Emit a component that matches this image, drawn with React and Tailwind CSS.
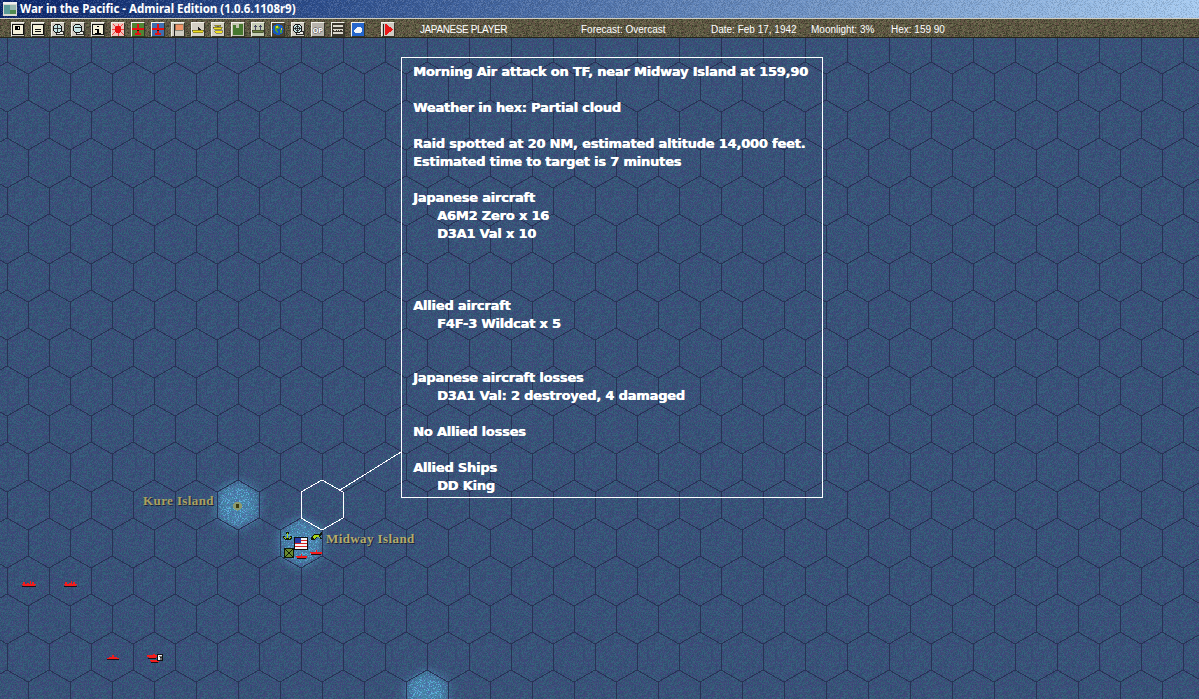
import React, { useMemo } from 'react';

// small seeded generator so the dither is the same on every load
const makeNoisePaths = (size, colors, seed) => {
  let s = seed;
  const next = () => {
    s = (s * 1664525 + 1013904223) % 4294967296;
    return s / 4294967296;
  };
  const paths = colors.map(() => '');
  for (let y = 0; y < size; y++) {
    for (let x = 0; x < size; x++) {
      const i = Math.floor(next() * colors.length);
      paths[i] += `M${x} ${y}h1v1h-1z`;
    }
  }
  return paths;
};

const NoiseTile = ({ id, size, colors, seed }) => {
  const paths = useMemo(() => makeNoisePaths(size, colors, seed), [size, colors, seed]);
  return (
    <pattern id={id} width={size} height={size} patternUnits="userSpaceOnUse">
      {paths.map((d, i) => (
        <path key={i} d={d} fill={colors[i]} />
      ))}
    </pattern>
  );
};

const DitherOverlay = ({ id, colors, seed }) => (
  <svg className="absolute inset-0 w-full h-full pointer-events-none" shapeRendering="crispEdges">
    <defs>
      <NoiseTile id={id} size={48} colors={colors} seed={seed} />
    </defs>
    <rect width="100%" height="100%" fill={`url(#${id})`} />
  </svg>
);

const MAP_NOISE = ['#2f6a7a99', '#46408699', '#00000000', '#2a4a6e88', '#4f4a7a66', '#3c6c8a88'];
const BAR_NOISE = ['#00000000', '#2a2a1a88', '#85856077', '#704c4c77', '#4a5a3a77'];
const TITLE_NOISE = ['#00000000', '#ffffff1c', '#0000001c', '#00000000'];

const hexPath = (cx, cy) =>
  `M${cx - 21} ${cy - 13}L${cx} ${cy - 25}L${cx + 21} ${cy - 13}V${cy + 13}L${cx} ${cy + 25}L${cx - 21} ${cy + 13}Z`;

const buildGrid = () => {
  let d = '';
  for (let k = -2; k < 10; k++) {
    for (let i = -1; i < 30; i++) {
      d += hexPath(28 + 42 * i, 125 + 76 * k);
      d += hexPath(49 + 42 * i, 87 + 76 * k);
    }
  }
  return d;
};

const Plane = () => (
  <>
    <path d="M6 1h2v12H6z" fill="#e81010" />
    <path d="M0 5h14v2.500H0zM4 11h6v2H4z" fill="#e81010" />
    <path d="M6 8h2v1H6z" fill="#300" />
  </>
);

const Frame = ({ fill = '#f4f0d8' }) => <rect x="1" y="1" width="12" height="12" fill={fill} stroke="#111" strokeWidth="1.400" />;

const Monitor = ({ children }) => (
  <>
    <path d="M5 9h8v4H5z" fill="#f0f0e8" stroke="#111" />
    <circle cx="6.500" cy="6" r="5" fill="#c4e4e4" stroke="#111" strokeWidth="1.300" />
    {children}
  </>
);

const toolIcons = [
  { art: <><Frame /><path d="M3 3h6v5H3z" fill="#000" /><path d="M7 4h1v2H7z" fill="#f4f0d8" /></> },
  { art: <><Frame /><path d="M3.500 3.500h7v1h-7zM3.500 6h7v1h-7zM3.500 8.500h7v1h-7zM3.500 10.500h5v1h-5z" fill="#111" /></> },
  { art: <Monitor><path d="M2 6h9M6.500 2v8" stroke="#222" /></Monitor> },
  { art: <Monitor><path d="M3 4.500h7v1H3zM3 7h7v1H3z" fill="#222" /></Monitor> },
  { art: <><Frame /><path d="M5.500 2.500h3v2h-3zM4 6h4.500v4.500H10v1.500H4v-1.500h1.500V7.500H4z" fill="#000" /></> },
  { bg: '#f0c4bc', art: <><path d="M7 0v14M0 7h14M1 1l12 12M13 1L1 13" stroke="#f03030" /><circle cx="7" cy="7" r="4" fill="#e81010" /></> },
  { bg: '#4f8434', art: <Plane /> },
  { bg: '#3f6eae', art: <Plane /> },
  { bg: '#cfcbc0', art: <><path d="M2.500 0v14" stroke="#222" strokeWidth="1.200" /><path d="M3.500 1h9.500v7H3.500z" fill="#f09468" stroke="#443" strokeWidth="0.600" /></> },
  { bg: '#d4d0c4', art: <><path d="M6.500 2h1v5h-1zM7.500 4l3 3h-3z" fill="#222" /><path d="M0 8h14l-2 3H2z" fill="#f0e020" stroke="#222" strokeWidth="0.500" /></> },
  { bg: '#d4d0c4', art: <path d="M3 2h7v1H7.500v1.500H12l-1.500 2.500H3L1.500 4.500h5V3H3zM3 8.500h10l-1.500 3H4.500z" fill="#f0e020" stroke="#222" strokeWidth="0.500" /> },
  { bg: '#c4c4b0', art: <path d="M1 2h4v3h3V1h5v12H1z" fill="#47782f" /> },
  { bg: '#c4ccb4', art: <><path d="M4 2v5M10 2v5M3 4l1-2 1 2M9 4l1-2 1 2" stroke="#335" fill="none" /><path d="M0 8h14l-1 3H1z" fill="#6a8040" stroke="#222" strokeWidth="0.500" /></> },
  { bg: '#4a4232', art: <><circle cx="7" cy="7" r="6.500" fill="#1858c0" /><path d="M3 4l4-2 2 3-3 2 1 4-3-2zM9 8l3-1-1 4-2 1z" fill="#50a030" /><path d="M5 3h2v2H5zM10 5h2v2h-2z" fill="#e8d020" /></> },
  { art: <Monitor><circle cx="6.500" cy="6" r="2.500" fill="none" stroke="#222" /><path d="M6.500 1v10M1.500 6h10" stroke="#222" /></Monitor> },
  { bg: '#b8b4ac', art: <text x="7" y="10.500" textAnchor="middle" fontFamily="'DejaVu Sans', sans-serif" fontWeight="700" fontSize="8" fill="#fff" stroke="#222" strokeWidth="0.800" paintOrder="stroke" textLength="12" lengthAdjust="spacingAndGlyphs">OP</text> },
  { bg: '#3c382e', art: <path d="M1 2h12v2H1zM1 6h12v1H1zM2 8h1v1H2zM4 8h1v1H4zM6 8h1v1H6zM8 8h1v1H8zM10 8h1v1h-1zM12 8h1v1h-1zM1 10h12v2H1z" fill="#dcd8cc" /> },
  { bg: '#2466cc', art: <path d="M3 10q-1-3 2-4 1-3 4-2 3 1 3 4 0 3-2 3H5q-2 0-2-1z" fill="#eef4fa" /> },
];

const ToolButton = ({ bg, art, className = 'mr-[6px]' }) => (
  <div className={`relative w-[14px] h-[15px] shrink-0 border border-t-[#f0f0e8] border-l-[#f0f0e8] border-r-[#35352a] border-b-[#35352a] bg-[#cfcbc2] ${className}`}>
    <svg width="12" height="13" viewBox="0 0 14 14" shapeRendering="crispEdges" style={bg ? { background: bg } : undefined}>
      {art}
    </svg>
  </div>
);

const Ship = ({ x, y, w }) => (
  <>
    <path d={`M${x} ${y + 3}h${w}v1h-1v1h-${w - 2}v-1h-1z`} fill="#f41c1c" />
    <path d={`M${x + 1} ${y + 1}h2v2h-2zM${x + w - 6} ${y}h1v3h-1zM${x + w - 4} ${y + 1}h2v2h-2zM${x + 5} ${y + 2}h2v1h-2z`} fill="#f41c1c" />
    <path d={`M${x} ${y + 5}h${w}v1h-${w}z`} fill="#1a1018" />
  </>
);

const reportLines = [
  { text: 'Morning Air attack on TF, near Midway Island at 159,90' },
  { text: '' },
  { text: 'Weather in hex: Partial cloud' },
  { text: '' },
  { text: 'Raid spotted at 20 NM, estimated altitude 14,000 feet.' },
  { text: 'Estimated time to target is 7 minutes' },
  { text: '' },
  { text: 'Japanese aircraft' },
  { text: 'A6M2 Zero x 16', indent: true },
  { text: 'D3A1 Val x 10', indent: true },
  { text: '' },
  { text: '' },
  { text: '' },
  { text: 'Allied aircraft' },
  { text: 'F4F-3 Wildcat x 5', indent: true },
  { text: '' },
  { text: '' },
  { text: 'Japanese aircraft losses' },
  { text: 'D3A1 Val: 2 destroyed, 4 damaged', indent: true },
  { text: '' },
  { text: 'No Allied losses' },
  { text: '' },
  { text: 'Allied Ships' },
  { text: 'DD King', indent: true },
];

const MapLayer = () => {
  const grid = useMemo(buildGrid, []);
  return (
    <svg className="absolute inset-0" width="1199" height="661" viewBox="0 38 1199 661">
      <defs>
        <NoiseTile id="mapNoise" size={64} colors={MAP_NOISE} seed={77} />
        <filter id="glow" x="-40%" y="-40%" width="180%" height="180%">
          <feGaussianBlur stdDeviation="5" />
        </filter>
      </defs>
      <rect x="0" y="38" width="1199" height="661" fill="#384f74" />
      <g filter="url(#glow)" fill="#5cb0dc">
        <path d={hexPath(238, 505)} />
        <path d={hexPath(301, 543)} />
        <path d={hexPath(427, 695)} />
      </g>
      <rect x="0" y="38" width="1199" height="661" fill="url(#mapNoise)" />
      <path d={grid} fill="none" stroke="#283254" strokeWidth="1" shapeRendering="crispEdges" />

      <g shapeRendering="crispEdges">
        <path d={hexPath(322, 505)} fill="none" stroke="#fff" />
        <path d="M340 490L401 452" stroke="#fff" fill="none" />

        {/* Kure atoll */}
        <circle cx="237.500" cy="506" r="4.500" fill="#8a9a70" />
        <circle cx="237.500" cy="506" r="2" fill="#3a3a10" />

        {/* Midway base icons */}
        <path d="M286 532h3v2h-1v4h2v-2h2v2l-2 2h-5l-2-2v-2h2v2h2v-4h-1z" fill="#101808" />
        <path d="M287 533h1v5h-1zM284 537h1l1 1.500h3l1-1.500h1l-1 2h-5z" fill="#a8d818" />
        <path d="M311 537l4-3h4l3-2v2l-2 2 2 3h-2l-2-2-4 3h-3z" fill="#101808" />
        <path d="M312 537l3-2h4l2-2-3 3 2 2-3-1-3 2z" fill="#a8d818" />
        <rect x="294.500" y="537.500" width="13" height="12" fill="#f4f4f4" stroke="#101010" />
        <path d="M295 540h12v1h-12zM295 543h12v1h-12zM295 546h12v1h-12z" fill="#d82020" />
        <rect x="295" y="538" width="6" height="5" fill="#2838a0" />
        <rect x="284.500" y="548.500" width="9" height="9" fill="#6a8a30" stroke="#101808" />
        <path d="M285 549l8 8M293 549l-8 8" stroke="#101808" />
        <path d="M296 556h11v1l-1 1h-9l-1-1zM301 554h1v2h-1z" fill="#f41c1c" />
        <path d="M297 558h9v1h-9z" fill="#1a1018" />
        <path d="M310 552h12v1l-1 1h-10l-1-1zM316 550h1v2h-1z" fill="#f41c1c" />
        <path d="M311 554h10v1h-10z" fill="#1a1018" />

        {/* task forces at sea */}
        <Ship x={22} y={581} w={14} />
        <Ship x={64} y={581} w={13} />
        <path d="M107 658h12v1h-12zM109 657h8v1h-8zM112 655h2v2h-2z" fill="#f41c1c" />
        <path d="M107 659h12v1h-12z" fill="#1a1018" />
        <path d="M147 655h6v-1h2v1h2v2h-1l-1 1h-6l-1-1h-1z" fill="#f41c1c" />
        <path d="M148 658h8v1h-8z" fill="#1a1018" />
        <path d="M150 660h9v1l-1 1h-7l-1-1z" fill="#f41c1c" />
        <path d="M151 662h7v1h-7z" fill="#1a1018" />
        <rect x="157.500" y="654.500" width="5" height="6" fill="#f4f4f4" stroke="#111" />
        <path d="M159 656h3v1h-2v.500h2v1h-2v.500h3" fill="none" stroke="#111" strokeWidth="0.600" />
      </g>
    </svg>
  );
};

export default function App() {
  return (
    <div className="w-[1199px] h-[699px] flex flex-col overflow-hidden bg-[#384f74]">
      {/* Title bar */}
      <div className="relative h-[18px] shrink-0 flex items-center pl-[3px] bg-gradient-to-r from-[#0a246a] to-[#a6caf0]">
        <DitherOverlay id="titleNoise" colors={TITLE_NOISE} seed={11} />
        <svg className="relative shrink-0" width="14" height="14" viewBox="0 0 14 14" shapeRendering="crispEdges">
          <rect width="14" height="14" fill="#d8d8d0" />
          <rect x="1" y="3" width="6" height="9" fill="#5a9a98" />
          <rect x="7" y="3" width="6" height="5" fill="#98b8b0" />
          <rect x="7" y="8" width="6" height="4" fill="#508a50" />
          <rect width="14" height="2" fill="#f0f0f0" />
        </svg>
        <span className="relative ml-[3px] font-['Noto_Sans',sans-serif] font-bold text-[11.500px] leading-none text-white whitespace-pre">
          War in the Pacific - Admiral Edition (1.0.6.1108r9)
        </span>
      </div>

      {/* Toolbar */}
      <div className="relative h-[20px] shrink-0 flex items-center pl-[11px] pt-[2px] bg-[#5c5742] border-t border-t-[#cfcbc0] border-b border-b-[#27261c] font-['Liberation_Sans',sans-serif] text-[10px] text-white whitespace-pre">
        <DitherOverlay id="barNoise" colors={BAR_NOISE} seed={29} />
        {toolIcons.map((icon, i) => (
          <ToolButton key={i} bg={icon.bg} art={icon.art} />
        ))}
        <ToolButton
          className="ml-[10px]"
          art={
            <>
              <path d="M2 0v14" stroke="#222" strokeWidth="1.500" />
              <path d="M4 0l9 7-9 7z" fill="#e81818" />
            </>
          }
        />
        <span className="relative ml-[25px] w-[161px] pt-[1px] tracking-[-0.4px]">JAPANESE PLAYER</span>
        <span className="relative w-[130px] pt-[1px]">Forecast: Overcast</span>
        <span className="relative w-[100px] pt-[1px]">Date: Feb 17, 1942</span>
        <span className="relative w-[80px] pt-[1px]">Moonlight: 3%</span>
        <span className="relative pt-[1px]">Hex: 159 90</span>
      </div>

      {/* Map */}
      <div className="relative flex-1">
        <MapLayer />

        <span className="absolute left-[143px] top-[455px] font-['Liberation_Serif',serif] font-bold text-[13px] leading-4 tracking-[0.4px] text-[#aaa262] [text-shadow:1px_1px_0_#1c2238] whitespace-pre">
          Kure Island
        </span>
        <span className="absolute left-[326px] top-[493px] font-['Liberation_Serif',serif] font-bold text-[13px] leading-4 tracking-[0.4px] text-[#b4ac6c] [text-shadow:1px_1px_0_#1c2238] whitespace-pre">
          Midway Island
        </span>

        {/* Combat report */}
        <div className="absolute left-[401px] top-[19px] w-[422px] h-[441px] border border-white pl-[11px] pt-[5px] font-['DejaVu_Sans',sans-serif] font-bold text-[13px] tracking-[-0.2px] leading-[18px] text-white [text-shadow:0.4px_0_0_#fff]">
          {reportLines.map((line, i) => (
            <div key={i} className={`h-[18px] whitespace-pre ${line.indent ? 'pl-6' : ''}`}>
              {line.text}
            </div>
          ))}
        </div>
      </div>
    </div>
  );
}
